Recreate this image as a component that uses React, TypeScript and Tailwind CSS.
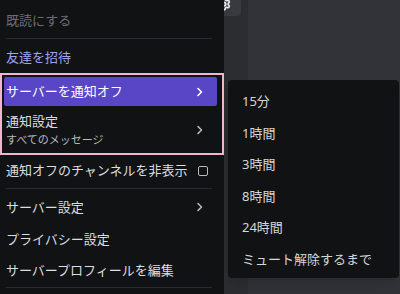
import React from 'react'
import { Settings } from 'lucide-react'

const font = { fontFamily: '"Noto Sans", "Noto Sans CJK JP", sans-serif' }

function Chevron({ className = '' }: { className?: string }) {
  return (
    <svg width="8" height="10" viewBox="0 0 8 10" className={className}>
      <path d="M2 1.5 L5.5 5 L2 8.5" fill="none" stroke="currentColor" strokeWidth="1.6" strokeLinecap="round" strokeLinejoin="round" />
    </svg>
  )
}

function Separator() {
  return <div className="my-[2px] ml-[2px] mr-[5px] h-px bg-[#2a2b30]" />
}

const durations = ['15分', '1時間', '3時間', '8時間', '24時間', 'ミュート解除するまで']

export default function App() {
  return (
    <div className="flex h-[294px] w-[400px] overflow-hidden text-[13px] leading-none" style={font}>
      {/* context menu */}
      <div className="relative z-10 flex w-[224px] shrink-0 flex-col bg-[#111214] pt-[4px] pl-[4px] pr-[7px]">
        <div className="flex h-[32px] items-center px-[2px] pt-[1px] text-[#6b6e76]">既読にする</div>
        <Separator />
        <div className="flex h-[32px] items-center px-[2px] text-[#9da3f5]">友達を招待</div>

        <div className="-ml-[4px] -mr-[7px] border-2 border-[#f1b6cd] pt-[2px] pb-[1px] pl-[2px] pr-[5px]">
          <div className="flex h-[29px] items-center justify-between rounded-[2px] bg-[#5846c6] pl-[2px] pr-[13px] text-white">
            <span>サーバーを通知オフ</span>
            <Chevron className="text-white" />
          </div>
          <div className="flex h-[46px] items-center justify-between pl-[2px] pr-[13px]">
            <div className="flex flex-col gap-[6px] pt-[1px]">
              <span className="text-[#dbdee1]">通知設定</span>
              <span className="text-[11px] text-[#b5bac1]">すべてのメッセージ</span>
            </div>
            <Chevron className="mt-[2px] text-[#b5bac1]" />
          </div>
        </div>

        <div className="flex h-[31px] items-center justify-between pl-[2px] pr-[9px] text-[#dbdee1]">
          <span>通知オフのチャンネルを非表示</span>
          <span className="h-[10px] w-[10px] rounded-[2px] border-[1.5px] border-[#b5bac1]" />
        </div>
        <Separator />
        <div className="flex h-[32px] items-center justify-between pl-[2px] pr-[13px] text-[#dbdee1]">
          <span>サーバー設定</span>
          <Chevron className="text-[#b5bac1]" />
        </div>
        <div className="flex h-[32px] items-center px-[2px] text-[#dbdee1]">プライバシー設定</div>
        <div className="flex h-[30px] items-center px-[2px] text-[#dbdee1]">サーバープロフィールを編集</div>
        <Separator />
      </div>

      {/* background channel area */}
      <div className="relative flex flex-1">
        <div className="flex w-[24px] flex-col bg-[#2b2d31]">
          <div className="relative h-[16px] w-[17px] overflow-hidden rounded-br-[4px] bg-[#383a40]">
            <Settings size={14} strokeWidth={3} className="absolute -left-[7px] -top-[3px] text-[#e3e5e8]" />
          </div>
        </div>
        <div className="flex-1 bg-[#313338]" />

        {/* submenu */}
        <div className="absolute left-[4px] top-[80px] flex h-[198px] w-[171px] flex-col rounded-[4px] bg-[#111214] pt-[6px] pb-[3px] pl-[14px] text-[#d4d7dc] shadow-lg">
          {durations.map((d) => (
            <div key={d} className="flex h-[31.5px] items-center">
              {d}
            </div>
          ))}
        </div>
      </div>
    </div>
  )
}
